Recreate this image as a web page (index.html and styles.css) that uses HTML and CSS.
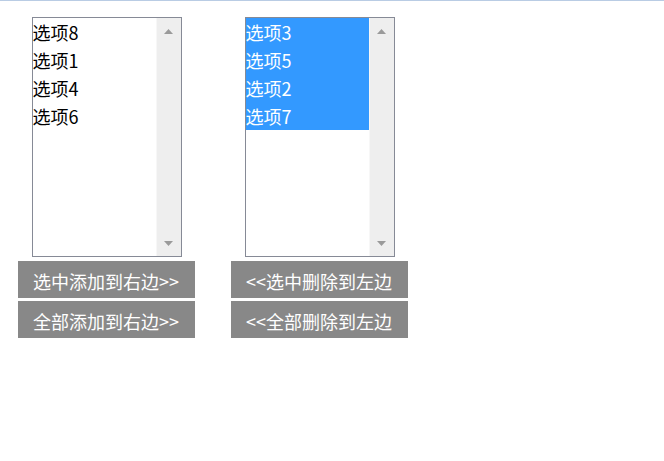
FILE: index.html
```html
<!DOCTYPE html>
<html lang="zh-CN">
<head>
<meta charset="utf-8">
<title>选项</title>
<link rel="stylesheet" href="styles.css">
</head>
<body>
<div class="wrap">
  <div class="col">
    <div class="listbox">
      <ul class="items">
        <li>选项8</li>
        <li>选项1</li>
        <li>选项4</li>
        <li>选项6</li>
      </ul>
      <div class="scrollbar">
        <svg class="arrow" width="9" height="5" viewBox="0 0 9 5"><polygon points="4.5,0 9,5 0,5" fill="#9a9a9a"/></svg>
        <svg class="arrow" width="9" height="5" viewBox="0 0 9 5"><polygon points="0,0 9,0 4.5,5" fill="#9a9a9a"/></svg>
      </div>
    </div>
    <div class="btn">选中添加到右边&gt;&gt;</div>
    <div class="btn">全部添加到右边&gt;&gt;</div>
  </div>
  <div class="col">
    <div class="listbox">
      <ul class="items">
        <li class="sel">选项3</li>
        <li class="sel">选项5</li>
        <li class="sel">选项2</li>
        <li class="sel">选项7</li>
      </ul>
      <div class="scrollbar">
        <svg class="arrow" width="9" height="5" viewBox="0 0 9 5"><polygon points="4.5,0 9,5 0,5" fill="#9a9a9a"/></svg>
        <svg class="arrow" width="9" height="5" viewBox="0 0 9 5"><polygon points="0,0 9,0 4.5,5" fill="#9a9a9a"/></svg>
      </div>
    </div>
    <div class="btn">&lt;&lt;选中删除到左边</div>
    <div class="btn">&lt;&lt;全部删除到左边</div>
  </div>
</div>
</body>
</html>
```

FILE: styles.css
```css
html, body {
  margin: 0;
  padding: 0;
  background: #fff;
}
body {
  border-top: 1px solid #b9cce4;
  font-family: "Noto Sans CJK SC", "Noto Sans", sans-serif;
  font-size: 18px;
  color: #000;
}
.wrap {
  display: flex;
  gap: 36px;
  padding: 16px 0 0 18px;
}
.col {
  width: 177px;
  display: flex;
  flex-direction: column;
  align-items: center;
}
.listbox {
  width: 150px;
  height: 240px;
  box-sizing: border-box;
  border: 1px solid #868a96;
  display: flex;
  margin-bottom: 4px;
}
.items {
  list-style: none;
  margin: 0;
  padding: 0;
  flex: 1;
}
.items li {
  height: 28px;
  line-height: 28px;
  white-space: nowrap;
}
.items li.sel {
  background: #3399ff;
  color: #fff;
}
.scrollbar {
  width: 25px;
  box-sizing: border-box;
  background: #eeeeee;
  border-left: 1px solid #f7f7f7;
  display: flex;
  flex-direction: column;
  justify-content: space-between;
  align-items: center;
  padding: 11px 0 10px;
}
.arrow {
  display: block;
}
.btn {
  width: 177px;
  height: 37px;
  box-sizing: border-box;
  background: #888888;
  color: #fff;
  padding: 7px 0 0 15px;
  line-height: 26px;
  white-space: nowrap;
  margin-bottom: 3px;
  align-self: stretch;
}
```
